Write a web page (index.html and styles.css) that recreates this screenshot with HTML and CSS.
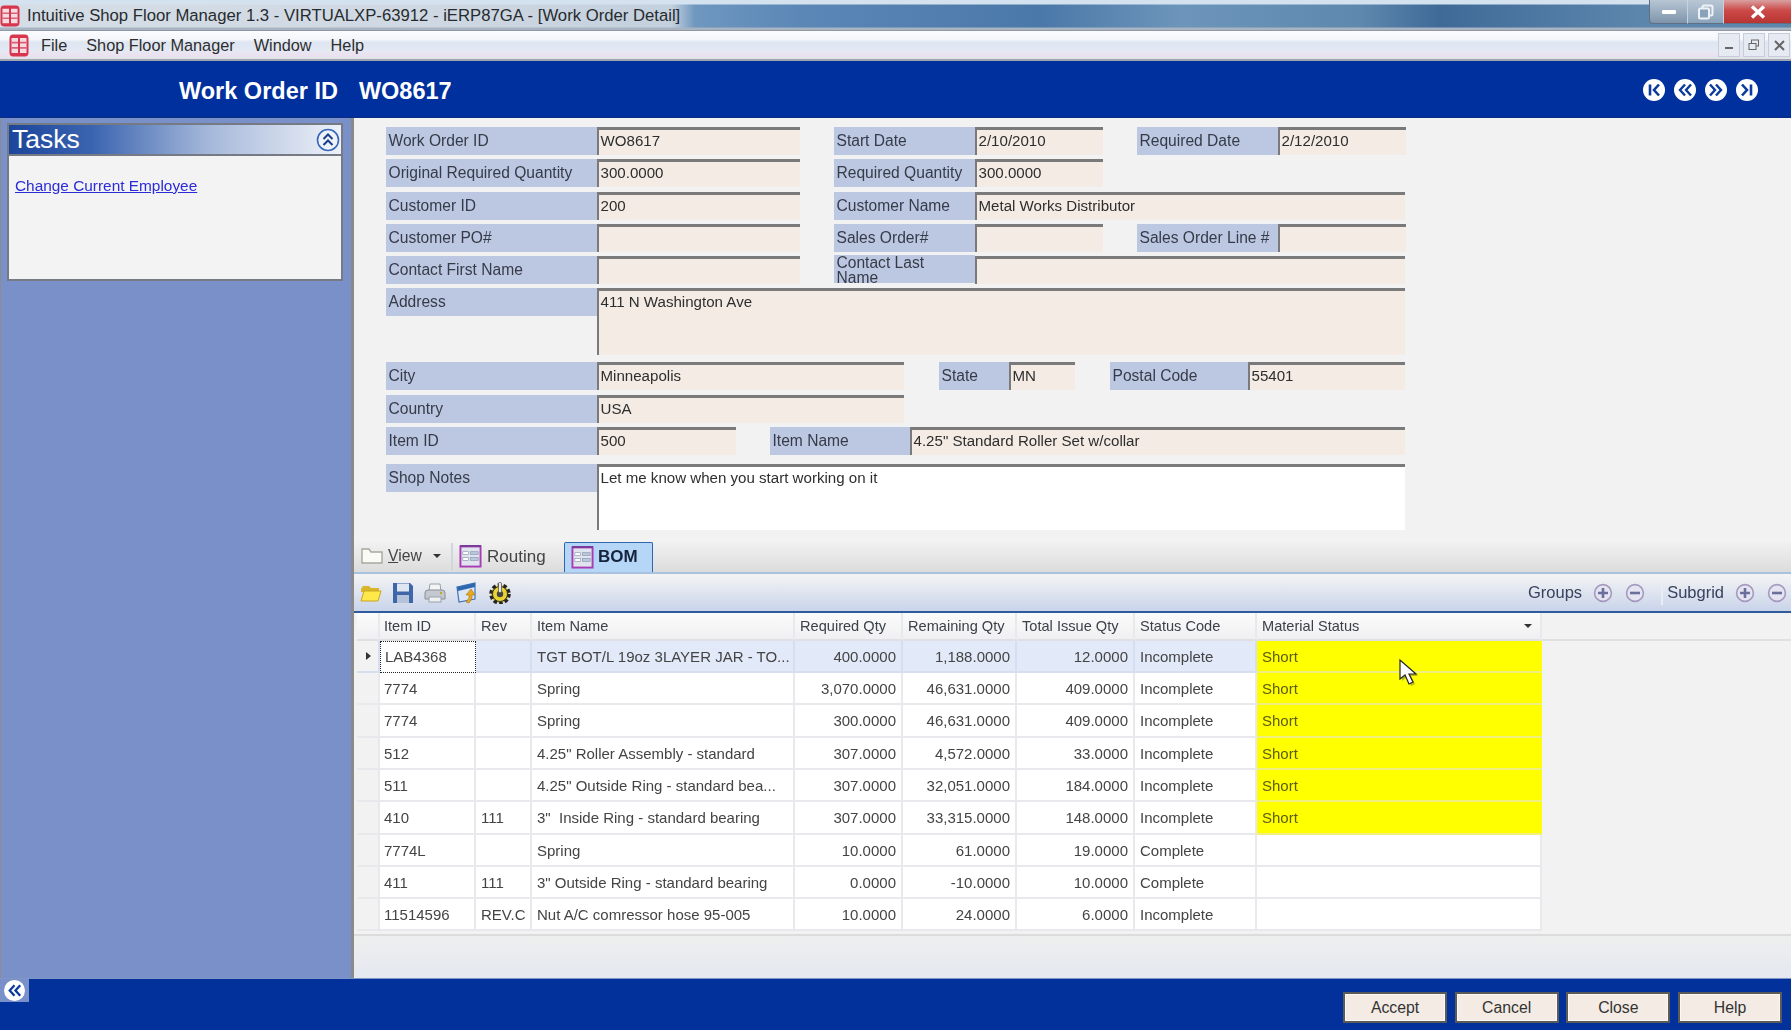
FILE: index.html
```html
<!DOCTYPE html>
<html lang="en">
<head>
  <meta charset="UTF-8">
  <title>Intuitive Shop Floor Manager 1.3 - [Work Order Detail]</title>
  <link rel="stylesheet" href="styles.css">
</head>
<body>
  <svg class="defs" width="0" height="0">
    <symbol id="app" viewBox="0 0 20 20" preserveAspectRatio="none">
      <rect x="0.5" y="0.5" width="19" height="19" rx="3.500" fill="#d8354f"/>
      <path d="M2.500 3.500h6.500v13H2.500zM11 3.500h6.500v13H11z" fill="#f6dce0"/>
      <path d="M2.500 7.500h6.500M2.500 12h6.500M11 7.500h6.500M11 12h6.500" stroke="#d8607a" stroke-width="1.500"/>
    </symbol>
    <symbol id="sheet" viewBox="0 0 24 24">
      <rect x="1.500" y="1.500" width="21" height="21" fill="#dfe4ee" stroke="#a83cb4" stroke-width="2"/>
      <path d="M1 1h22" stroke="#7a3c9c" stroke-width="2"/>
      <rect x="4" y="7" width="6" height="3" fill="#fff" stroke="#8b98b0" stroke-width=".7"/>
      <rect x="12" y="7" width="8" height="3" fill="#bcc8dc" stroke="#8b98b0" stroke-width=".7"/>
      <rect x="4" y="13" width="6" height="3" fill="#fff" stroke="#8b98b0" stroke-width=".7"/>
      <rect x="12" y="13" width="8" height="3" fill="#bcc8dc" stroke="#8b98b0" stroke-width=".7"/>
    </symbol>
    <symbol id="plus" viewBox="0 0 20 20">
      <circle cx="10" cy="10" r="8.400" fill="#e6e4f0" stroke="#a49ac0" stroke-width="1.600"/>
      <path d="M10 5v10M5 10h10" stroke="#6a6f9c" stroke-width="2.600"/>
    </symbol>
    <symbol id="minus" viewBox="0 0 20 20">
      <circle cx="10" cy="10" r="8.400" fill="#e6e4f0" stroke="#a49ac0" stroke-width="1.600"/>
      <path d="M5 10h10" stroke="#6a6f9c" stroke-width="2.600"/>
    </symbol>
    <symbol id="first" viewBox="0 0 22 22">
      <circle cx="11" cy="11" r="11" fill="#fff"/>
      <path d="M7 5.500v11" stroke="#0a3a9c" stroke-width="2.600"/>
      <path d="M16 5.500 11 11l5 5.500" fill="none" stroke="#0a3a9c" stroke-width="2.600"/>
    </symbol>
    <symbol id="prev" viewBox="0 0 22 22">
      <circle cx="11" cy="11" r="11" fill="#fff"/>
      <path d="M11 5.500 6 11l5 5.500M17 5.500 12 11l5 5.500" fill="none" stroke="#0a3a9c" stroke-width="2.400"/>
    </symbol>
    <symbol id="next" viewBox="0 0 22 22">
      <circle cx="11" cy="11" r="11" fill="#fff"/>
      <path d="M5 5.500 10 11l-5 5.500M11 5.500 16 11l-5 5.500" fill="none" stroke="#0a3a9c" stroke-width="2.400"/>
    </symbol>
    <symbol id="last" viewBox="0 0 22 22">
      <circle cx="11" cy="11" r="11" fill="#fff"/>
      <path d="M15 5.500v11" stroke="#0a3a9c" stroke-width="2.600"/>
      <path d="M6 5.500 11 11l-5 5.500" fill="none" stroke="#0a3a9c" stroke-width="2.600"/>
    </symbol>
  </svg>

  <div class="titlebar">
    <svg class="title-icon"><use href="#app"/></svg>
    <span class="title-text">Intuitive Shop Floor Manager 1.3 - VIRTUALXP-63912 - iERP87GA - [Work Order Detail]</span>
    <div class="win-buttons">
      <div class="win-btn win-min"><svg width="16" height="6"><rect width="14" height="4" x="1" y="1" rx="1" fill="#fff"/></svg></div>
      <div class="win-btn win-max"><svg width="18" height="16"><rect x="5.500" y="1.500" width="10" height="10" rx="1.500" fill="none" stroke="#eef2f6" stroke-width="2"/><rect x="2" y="4.500" width="10" height="10" rx="1.500" fill="#8aa3ba" stroke="#eef2f6" stroke-width="2"/></svg></div>
      <div class="win-btn win-close"><svg width="16" height="14"><path d="M2 1.500 14 12.500M14 1.500 2 12.500" stroke="#fff" stroke-width="3.400"/></svg></div>
    </div>
  </div>

  <div class="menubar">
    <svg class="menu-icon"><use href="#app"/></svg>
    <span class="menu-item">File</span>
    <span class="menu-item">Shop Floor Manager</span>
    <span class="menu-item">Window</span>
    <span class="menu-item">Help</span>
    <div class="mdi-buttons">
      <div class="mdi-btn"><svg width="10" height="10"><path d="M1 8h8" stroke="#666" stroke-width="2"/></svg></div>
      <div class="mdi-btn"><svg width="12" height="12"><rect x="3.500" y="1" width="7" height="6" fill="none" stroke="#666"/><rect x="1" y="4.500" width="7" height="6" fill="#e8eaf2" stroke="#666"/></svg></div>
      <div class="mdi-btn"><svg width="11" height="11"><path d="M1 1 10 10M10 1 1 10" stroke="#666" stroke-width="2"/></svg></div>
    </div>
  </div>

  <div class="page-head">
    <span class="head-label">Work Order ID</span>
    <span class="head-value">WO8617</span>
    <div class="head-nav">
      <svg class="nav-icon"><use href="#first"/></svg>
      <svg class="nav-icon"><use href="#prev"/></svg>
      <svg class="nav-icon"><use href="#next"/></svg>
      <svg class="nav-icon"><use href="#last"/></svg>
    </div>
  </div>

  <div class="content">
    <aside class="sidebar">
      <div class="tasks">
        <div class="tasks-head">
          <span>Tasks</span>
          <svg width="24" height="24" viewBox="0 0 24 24"><circle cx="12" cy="12" r="10.500" fill="#eef2fa" stroke="#3a68b8" stroke-width="1.600"/><path d="M7.500 11 12 6.500l4.500 4.500M7.500 17 12 12.500l4.500 4.500" fill="none" stroke="#1c3f8c" stroke-width="2"/></svg>
        </div>
        <div class="tasks-body"><a class="task-link" href="#">Change Current Employee</a></div>
      </div>
    </aside>

    <main class="main">
      <div class="form">
        <div class="row">
          <div class="lbl">Work Order ID</div><div class="val w-a">WO8617</div>
          <div class="lbl lbl-b">Start Date</div><div class="val w-b">2/10/2010</div>
          <div class="lbl lbl-b">Required Date</div><div class="val w-b">2/12/2010</div>
        </div>
        <div class="row">
          <div class="lbl">Original Required Quantity</div><div class="val w-a">300.0000</div>
          <div class="lbl lbl-b">Required Quantity</div><div class="val w-b">300.0000</div>
        </div>
        <div class="row">
          <div class="lbl">Customer ID</div><div class="val w-a">200</div>
          <div class="lbl lbl-b">Customer Name</div><div class="val grow">Metal Works Distributor</div>
        </div>
        <div class="row">
          <div class="lbl">Customer PO#</div><div class="val w-a"></div>
          <div class="lbl lbl-b">Sales Order#</div><div class="val w-b"></div>
          <div class="lbl lbl-b">Sales Order Line #</div><div class="val w-b"></div>
        </div>
        <div class="row">
          <div class="lbl">Contact First Name</div><div class="val w-a"></div>
          <div class="lbl lbl-b lbl-wrap">Contact Last Name</div><div class="val grow"></div>
        </div>
        <div class="row row-tall">
          <div class="lbl">Address</div><div class="val grow">411 N Washington Ave</div>
        </div>
        <div class="row">
          <div class="lbl">City</div><div class="val w-c">Minneapolis</div>
          <div class="lbl lbl-state">State</div><div class="val w-state">MN</div>
          <div class="lbl lbl-postal">Postal Code</div><div class="val grow">55401</div>
        </div>
        <div class="row">
          <div class="lbl">Country</div><div class="val w-c">USA</div>
        </div>
        <div class="row row-item">
          <div class="lbl">Item ID</div><div class="val w-item">500</div>
          <div class="lbl lbl-b lbl-name">Item Name</div><div class="val grow">4.25" Standard Roller Set w/collar</div>
        </div>
        <div class="row row-notes">
          <div class="lbl">Shop Notes</div><div class="val grow val-white">Let me know when you start working on it</div>
        </div>
      </div>

      <div class="tabs">
        <div class="tab-view">
          <svg width="22" height="18" viewBox="0 0 22 18"><path d="M1 16V2h7l2 3h11v11z" fill="#fafaf6" stroke="#a8a8a0" stroke-width="1.400"/></svg>
          <span><u>V</u>iew</span>
          <i class="caret"></i>
        </div>
        <div class="tab tab-plain"><svg width="23" height="23"><use href="#sheet"/></svg>Routing</div>
        <div class="tab tab-active"><svg width="23" height="23"><use href="#sheet"/></svg>BOM</div>
      </div>

      <div class="toolbar">
        <svg class="tool" viewBox="0 0 22 22"><path d="M1 7 3 4h6l2 2h8v4H1z" fill="#d9b52a"/><path d="M1 19 4 9h17l-3 10z" fill="#ffe84a" stroke="#c9a520"/></svg>
        <svg class="tool" viewBox="0 0 22 22"><path d="M1 1h17l3 3v17H1z" fill="#3f66a8"/><rect x="5" y="1.500" width="12" height="8" fill="#dfe6f2"/><rect x="5" y="13" width="12" height="8" fill="#b4c2da"/></svg>
        <svg class="tool" viewBox="0 0 22 22"><path d="M6 2h10l1 7H5z" fill="#f4f4f4" stroke="#9aa0aa"/><path d="M1 11q0-3 3-3h14q3 0 3 3v6H1z" fill="#c4c8d0" stroke="#8a8e98"/><rect x="5" y="15" width="12" height="5" fill="#eef0f4" stroke="#9aa0aa"/><circle cx="17" cy="11" r="1.200" fill="#c9a520"/></svg>
        <svg class="tool" viewBox="0 0 22 22"><path d="M1 5 19 1v16L3 20z" fill="#dbe6f6" stroke="#3f74b8" stroke-width="1.200"/><path d="M1 5 19 1v4L2 9z" fill="#2f66b0"/><path d="M15 7l4 6h-3v3l-3 5-3-1 3-4v-3h-3z" fill="#e8a820" stroke="#a87410" stroke-width=".6"/></svg>
        <svg class="tool tool-gear" viewBox="0 0 24 22"><circle cx="12" cy="12" r="9" fill="#d8c020" stroke="#222" stroke-width="3.500" stroke-dasharray="3.500 2.200"/><circle cx="12" cy="12" r="7.500" fill="#e8d430" stroke="#333"/><circle cx="12" cy="12" r="3.200" fill="#444"/><rect x="10.500" y="0.500" width="3" height="10" rx="1" fill="#e8e8e8" stroke="#444" stroke-width=".7"/></svg>
        <div class="tool-right">
          <span>Groups</span>
          <svg class="round"><use href="#plus"/></svg>
          <svg class="round"><use href="#minus"/></svg>
          <i class="tool-sep"></i>
          <span>Subgrid</span>
          <svg class="round"><use href="#plus"/></svg>
          <svg class="round"><use href="#minus"/></svg>
        </div>
      </div>

      <div class="grid">
        <div class="grid-row grid-head">
          <div class="cell row-mark"></div>
          <div class="cell cell-id">Item ID</div>
          <div class="cell">Rev</div>
          <div class="cell">Item Name</div>
          <div class="cell">Required Qty</div>
          <div class="cell">Remaining Qty</div>
          <div class="cell">Total Issue Qty</div>
          <div class="cell">Status Code</div>
          <div class="cell cell-drop">Material Status<i class="caret"></i></div>
          <div class="cell cell-fill"></div>
        </div>
        <div class="grid-row grid-current">
          <div class="cell row-mark"><i class="row-arrow"></i></div>
          <div class="cell cell-id cell-focus">LAB4368</div>
          <div class="cell"></div>
          <div class="cell">TGT BOT/L 19oz 3LAYER JAR - TO...</div>
          <div class="cell num">400.0000</div>
          <div class="cell num">1,188.0000</div>
          <div class="cell num">12.0000</div>
          <div class="cell">Incomplete</div>
          <div class="cell short">Short</div>
        </div>
        <div class="grid-row">
          <div class="cell row-mark"></div>
          <div class="cell cell-id">7774</div>
          <div class="cell"></div>
          <div class="cell">Spring</div>
          <div class="cell num">3,070.0000</div>
          <div class="cell num">46,631.0000</div>
          <div class="cell num">409.0000</div>
          <div class="cell">Incomplete</div>
          <div class="cell short">Short</div>
        </div>
        <div class="grid-row">
          <div class="cell row-mark"></div>
          <div class="cell cell-id">7774</div>
          <div class="cell"></div>
          <div class="cell">Spring</div>
          <div class="cell num">300.0000</div>
          <div class="cell num">46,631.0000</div>
          <div class="cell num">409.0000</div>
          <div class="cell">Incomplete</div>
          <div class="cell short">Short</div>
        </div>
        <div class="grid-row">
          <div class="cell row-mark"></div>
          <div class="cell cell-id">512</div>
          <div class="cell"></div>
          <div class="cell">4.25" Roller Assembly - standard</div>
          <div class="cell num">307.0000</div>
          <div class="cell num">4,572.0000</div>
          <div class="cell num">33.0000</div>
          <div class="cell">Incomplete</div>
          <div class="cell short">Short</div>
        </div>
        <div class="grid-row">
          <div class="cell row-mark"></div>
          <div class="cell cell-id">511</div>
          <div class="cell"></div>
          <div class="cell">4.25" Outside Ring - standard bea...</div>
          <div class="cell num">307.0000</div>
          <div class="cell num">32,051.0000</div>
          <div class="cell num">184.0000</div>
          <div class="cell">Incomplete</div>
          <div class="cell short">Short</div>
        </div>
        <div class="grid-row">
          <div class="cell row-mark"></div>
          <div class="cell cell-id">410</div>
          <div class="cell">111</div>
          <div class="cell">3"&nbsp; Inside Ring - standard bearing</div>
          <div class="cell num">307.0000</div>
          <div class="cell num">33,315.0000</div>
          <div class="cell num">148.0000</div>
          <div class="cell">Incomplete</div>
          <div class="cell short">Short</div>
        </div>
        <div class="grid-row">
          <div class="cell row-mark"></div>
          <div class="cell cell-id">7774L</div>
          <div class="cell"></div>
          <div class="cell">Spring</div>
          <div class="cell num">10.0000</div>
          <div class="cell num">61.0000</div>
          <div class="cell num">19.0000</div>
          <div class="cell">Complete</div>
          <div class="cell"></div>
        </div>
        <div class="grid-row">
          <div class="cell row-mark"></div>
          <div class="cell cell-id">411</div>
          <div class="cell">111</div>
          <div class="cell">3" Outside Ring - standard bearing</div>
          <div class="cell num">0.0000</div>
          <div class="cell num">-10.0000</div>
          <div class="cell num">10.0000</div>
          <div class="cell">Complete</div>
          <div class="cell"></div>
        </div>
        <div class="grid-row">
          <div class="cell row-mark"></div>
          <div class="cell cell-id">11514596</div>
          <div class="cell">REV.C</div>
          <div class="cell">Nut A/C comressor hose 95-005</div>
          <div class="cell num">10.0000</div>
          <div class="cell num">24.0000</div>
          <div class="cell num">6.0000</div>
          <div class="cell">Incomplete</div>
          <div class="cell"></div>
        </div>
      </div>
      <div class="grid-foot"></div>
    </main>
  </div>

  <div class="footer">
    <div class="back-tab"><svg class="nav-icon"><use href="#prev"/></svg></div>
    <button class="btn">Accept</button>
    <button class="btn">Cancel</button>
    <button class="btn">Close</button>
    <button class="btn">Help</button>
  </div>

  <svg class="cursor" width="24" height="30" viewBox="0 0 24 30">
    <path d="M4 4v19l5-4 4 9 4-2-4-8h7z" fill="#8a8a20" opacity=".6"/>
    <path d="M2 2v19l5-4 4 9 4-2-4-8h7z" fill="#fff" stroke="#222" stroke-width="1.200"/>
  </svg>
</body>
</html>
```

FILE: styles.css
```css
* {
  margin: 0;
  padding: 0;
  box-sizing: border-box;
}
html, body {
  height: 100%;
}
body {
  display: flex;
  flex-direction: column;
  font-family: "Liberation Sans", Arial, sans-serif;
  font-size: 15.1px;
  color: #333;
  background: #f2f2f2;
  overflow: hidden;
  filter: blur(0.4px);
}
.defs {
  position: absolute;
}

/* window chrome */
.titlebar {
  display: flex;
  align-items: center;
  height: 31px;
  flex: none;
  padding-top: 2px;
  border-bottom: 1px solid #8f98a4;
  background:
    linear-gradient(to bottom, #d4e2f0 0, #d4e2f0 4px, transparent 5px, transparent 27px, #a8b4c2 28px),
    linear-gradient(to right, #d5dde6 0, #d0d9e3 400px, #c3d0dd 672px, #6f97bf 695px, #5b87b7 800px, #4a78a8 1040px, #6d95bb 1180px, #5e88ad 1360px, #3f6a98 1440px, #5c86ac 1640px);
}
.title-icon {
  width: 20px;
  height: 22px;
  flex: none;
}
.title-text {
  margin-left: 7px;
  font-size: 16.7px;
  color: #272b2f;
  white-space: nowrap;
}
.win-buttons {
  display: flex;
  margin-left: auto;
  align-self: flex-start;
  height: 24px;
  margin-top: -2px;
}
.win-btn {
  display: flex;
  align-items: center;
  justify-content: center;
  height: 24px;
  border-bottom: 1px solid #5f7084;
}
.win-min {
  width: 38px;
  background: linear-gradient(#b8c6d4, #7e95ac);
  border-left: 1px solid #5f7084;
  border-bottom-left-radius: 4px;
}
.win-max {
  width: 36px;
  background: linear-gradient(#b8c6d4, #8aa3ba);
  border-left: 1px solid #c8d2dc;
}
.win-close {
  width: 68px;
  background: linear-gradient(#d8a0a0 0, #cc4a48 45%, #b83432 100%);
  border-left: 1px solid #c8d2dc;
}
.menubar {
  display: flex;
  align-items: center;
  height: 30px;
  flex: none;
  padding-left: 9px;
  font-size: 16.3px;
  border-bottom: 2px solid #9fa6ae;
  background: linear-gradient(#fcfcff 0, #f4f6fb 30%, #dfe6f1 40%, #e4e9f4 70%, #ece2f0 85%, #dfe3ea 100%);
}
.menu-icon {
  width: 20px;
  height: 23px;
  margin-right: 12px;
}
.menu-item {
  margin-right: 19px;
  color: #2e2e2e;
}
.mdi-buttons {
  display: flex;
  gap: 3px;
  margin-left: auto;
  margin-right: 1px;
}
.mdi-btn {
  display: flex;
  align-items: center;
  justify-content: center;
  width: 22px;
  height: 24px;
  background: #e6eaf3;
  border: 1px solid #c6ccd8;
}

/* blue header */
.page-head {
  display: flex;
  align-items: center;
  height: 57px;
  flex: none;
  padding: 4px 33px 0 179px;
  background: #002f9e;
  color: #fff;
  font-size: 23.5px;
  font-weight: bold;
  border-bottom: 1px solid #0b2a80;
}
.head-value {
  margin-left: 21px;
}
.head-nav {
  display: flex;
  gap: 9px;
  margin-left: auto;
  margin-top: -3px;
}
.nav-icon {
  display: block;
  width: 22px;
  height: 22px;
}

.content {
  display: flex;
  flex: 1;
  min-height: 0;
}

/* left task pane */
.sidebar {
  width: 351px;
  flex: none;
  padding: 5px 8px 0 6px;
  background: #7a90c8;
  border-left: 1px solid #8c8c8c;
}
.tasks {
  height: 158px;
  background: #f3f3f3;
  border: 2px solid #757a85;
}
.tasks-head {
  display: flex;
  align-items: center;
  justify-content: space-between;
  height: 31px;
  padding: 0 1px 0 3px;
  color: #fff;
  font-size: 26.5px;
  background: linear-gradient(to right, #1c459c 0, #3b64b0 25%, #a5b8da 60%, #eef1f8 100%);
  border-bottom: 2px solid #757a85;
}
.tasks-body {
  padding-top: 21px;
  padding-left: 6px;
}
.task-link {
  font-size: 15.4px;
  color: #2b2bd8;
}

/* form */
.main {
  display: flex;
  flex-direction: column;
  flex: 1;
  min-width: 0;
  border-left: 3px solid #8a8a8a;
}
.form {
  padding: 9px 0 0 32px;
  width: 1051px;
}
.row {
  display: flex;
  height: 28px;
  margin-bottom: 4.25px;
}
.row-tall {
  height: 67px;
  margin-bottom: 7px;
}
.row-item {
  margin-bottom: 9px;
}
.row-notes {
  height: 66px;
  margin-bottom: 0;
}
.lbl {
  flex: none;
  width: 211px;
  height: 28px;
  padding: 0 2.5px;
  font-size: 15.6px;
  line-height: 27.5px;
  background: #bcc7e2;
  color: #363b48;
  white-space: nowrap;
}
.lbl-b {
  width: 141px;
  margin-left: 34px;
}
.lbl-wrap {
  padding-right: 20px;
  white-space: normal;
  line-height: 15px;
  margin-top: -1px;
}
.lbl-state {
  width: 70px;
  margin-left: 35px;
}
.lbl-postal {
  width: 138px;
  margin-left: 35px;
}
.lbl-name {
  width: 140px;
}
.val {
  flex: none;
  padding-left: 1.5px;
  line-height: 21px;
  background: #f3ebe4;
  border-top: 3px solid #7a7a7a;
  border-left: 2px solid #7a7a7a;
  color: #2e2e2e;
  white-space: nowrap;
}
.w-a { width: 203px; }
.w-b { width: 128px; }
.w-c { width: 307px; }
.w-state { width: 66px; }
.w-item { width: 139px; }
.grow { flex: 1; }
.val-white { background: #fff; }

/* tab strip */
.tabs {
  display: flex;
  align-items: flex-end;
  height: 33px;
  flex: none;
  margin-top: 11px;
  padding-left: 7px;
  background: linear-gradient(#f2f2f2, #dcdcdc);
  border-bottom: 2px solid #a8c2e0;
}
.tab-view {
  display: flex;
  align-items: center;
  align-self: center;
  width: 92px;
  font-size: 15.7px;
  color: #444;
  border-right: 2px solid #cfd6e0;
  height: 27px;
  gap: 5px;
}
.caret {
  display: inline-block;
  width: 0;
  height: 0;
  margin-left: 6px;
  border-left: 4px solid transparent;
  border-right: 4px solid transparent;
  border-top: 4px solid #333;
}
.tab {
  display: flex;
  align-items: center;
  gap: 5px;
  height: 30px;
  font-size: 17px;
  white-space: nowrap;
}
.tab-plain {
  width: 111px;
  padding-left: 6px;
  color: #444;
}
.tab-active {
  width: 89px;
  padding-left: 6px;
  gap: 4px;
  color: #15233c;
  font-weight: bold;
  background: #b6d6f8;
  border: 1px solid #2f66b0;
  border-bottom: none;
  border-radius: 2px 2px 0 0;
}

/* grid toolbar */
.toolbar {
  display: flex;
  align-items: center;
  height: 39px;
  flex: none;
  gap: 10px;
  padding: 1px 0 0 6px;
  background: linear-gradient(#f4f4f4, #c9d4ea);
  border-bottom: 2px solid #2f5a9c;
}
.tool {
  width: 22px;
  height: 22px;
}
.tool-gear {
  width: 24px;
}
.tool-right {
  display: flex;
  align-items: center;
  margin-left: auto;
  margin-right: 4px;
  font-size: 16.5px;
  color: #36425e;
}
.round {
  width: 20px;
  height: 20px;
  margin-left: 12px;
}
.tool-right span + .round {
  margin-left: 11px;
}
.tool-sep {
  width: 2px;
  height: 24px;
  margin: 0 4px 0 16px;
  background: #e8edf6;
}

/* data grid */
.grid {
  flex: none;
  margin-left: 3px;
}
.grid-row {
  display: grid;
  grid-template-columns: 23px 96px 56px 263px 108px 114px 118px 122px 285px;
  width: 1185px;
  height: 32.3px;
  background: #fff;
}
.cell {
  padding: 0 5px;
  font-size: 15px;
  line-height: 31px;
  color: #444;
  white-space: nowrap;
  overflow: hidden;
  border-right: 2px solid #e8e9ec;
  border-bottom: 2px solid #e8e9ec;
}
.cell-id {
  padding-left: 4px;
}
.grid-head {
  grid-template-columns: 23px 96px 56px 263px 108px 114px 118px 122px 285px 1fr;
  width: auto;
  height: 28px;
  background: none;
}
.grid-head .cell {
  font-size: 14.6px;
  line-height: 26px;
  color: #3c4048;
  background: linear-gradient(#fbfbfb, #f0f0f2);
  border-bottom-color: #dfe0e4;
}
.grid-head .cell-fill {
  background: #f2f2f2;
  border-right: none;
}
.cell-drop {
  display: flex;
  align-items: center;
  justify-content: space-between;
  padding-right: 8px;
}
.row-mark {
  position: relative;
  background: #f2f2f2;
}
.grid-current {
  background: #e2e9f8;
}
.grid-current .cell {
  border-right-color: #d6dff0;
  border-bottom-color: #d6dff0;
}
.row-arrow {
  position: absolute;
  left: 9px;
  top: 11px;
  border-top: 4px solid transparent;
  border-bottom: 4px solid transparent;
  border-left: 5px solid #333;
}
.grid-current .cell-focus {
  background: #fff;
  border: 1px dotted #222;
  line-height: 29px;
}
.num {
  text-align: right;
}
.short,
.grid-current .short {
  background: #ffff00;
  color: #5c5c14;
  border-right: none;
  border-bottom-color: #f0f080;
}
.grid-foot {
  flex: 1;
  margin-top: 3px;
  border-top: 2px solid #dcdcdc;
  background: linear-gradient(#eeeeee, #e4e9f0);
}

/* bottom buttons */
.footer {
  position: relative;
  display: flex;
  align-items: flex-start;
  justify-content: flex-end;
  gap: 7.67px;
  height: 52px;
  flex: none;
  padding: 13px 9px 0 0;
  background: #03319b;
  border-top: 1px solid #7f95c8;
}
.back-tab {
  position: absolute;
  left: 0;
  top: 0;
  padding: 1px 4px 0 4px;
  width: 29px;
  height: 23px;
  background: #7a90c8;
}
.back-tab .nav-icon {
  width: 21px;
  height: 21px;
}
.btn {
  width: 104px;
  height: 31px;
  font-family: inherit;
  font-size: 15.8px;
  color: #333;
  background: #f3ebe4;
  border: 2px solid #5a5a58;
  box-shadow: inset 0 0 0 1px #fbf7f2;
}
.cursor {
  position: absolute;
  left: 1398px;
  top: 658px;
}
```
